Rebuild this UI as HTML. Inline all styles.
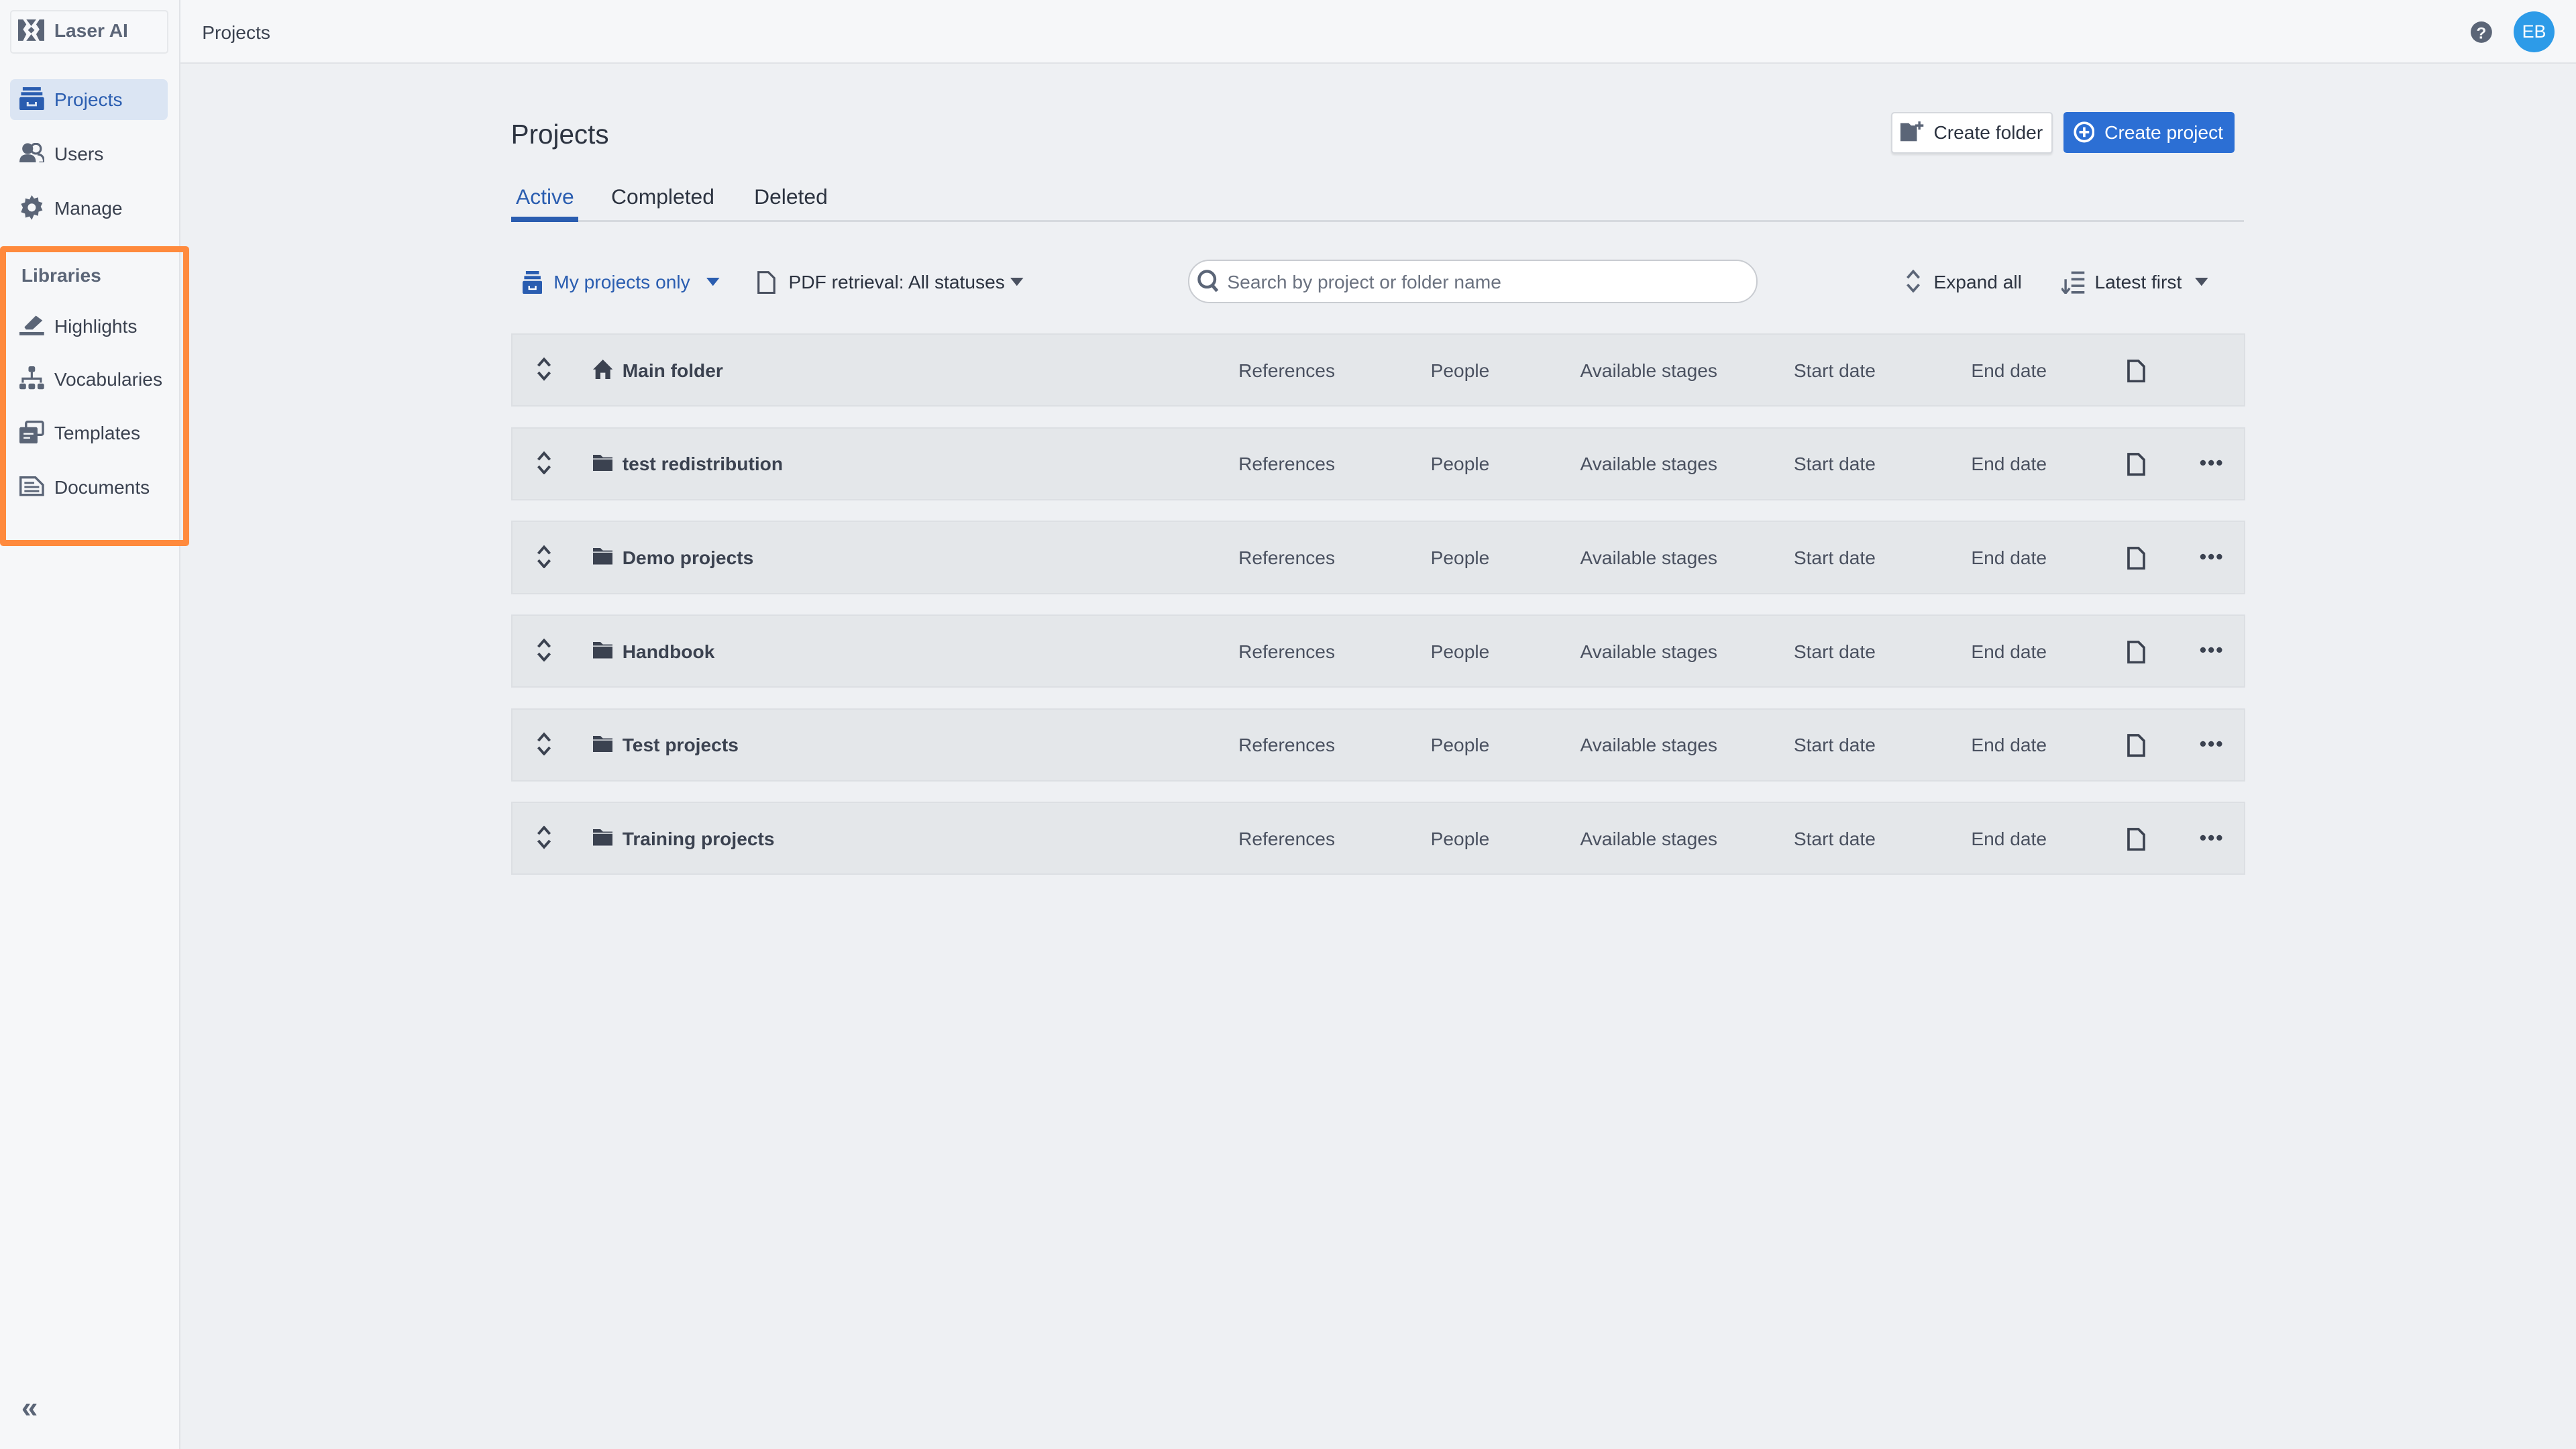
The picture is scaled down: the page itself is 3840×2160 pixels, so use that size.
<!DOCTYPE html>
<html><head><meta charset="utf-8"><style>
html,body{margin:0;padding:0;width:3840px;height:2160px;overflow:hidden;background:#eef0f3}
#w{position:relative;width:1568px;height:882px;zoom:2.44898;font-family:"Liberation Sans",sans-serif;color:#3b4250;font-size:11.5px}
.a{position:absolute}
.t{position:absolute;white-space:nowrap;line-height:14px}
svg{position:absolute;display:block}
.row{position:absolute;left:311px;width:1054px;height:43px;background:#e4e7ea;border:1px solid #dcdfe3}
.row .t{top:15px;color:#4a5160}
.nm{font-weight:bold;color:#3b4250!important}
</style></head><body><div id="w">
<div class="a" style="left:0;top:0;width:109px;height:882px;background:#f6f7f9;border-right:1px solid #e1e3e7"></div>
<div class="a" style="left:110px;top:0;width:1458px;height:38px;background:#f6f7f9;border-bottom:1px solid #e1e3e7"></div>
<div class="a" style="left:6px;top:6px;width:95px;height:25px;border:1px solid #e6e8eb;border-radius:2px;background:#f7f8fa"></div>
<svg style="left:11px;top:12px" width="16" height="13" viewBox="0 0 16 13"><path d="M0 0h3l2 3-2 3 2 3-2 4H0zM16 0h-3l-2 3 2 3-2 3 2 4h3zM5 0h6L8 4zM5 13h6L8 9zM6 6.5l2-2 2 2-2 2z" fill="#5b6577"/></svg>
<div class="t" style="left:33px;top:12px;font-weight:bold;color:#5b6577">Laser AI</div>
<div class="a" style="left:6px;top:48px;width:96px;height:25px;background:#dbe5f3;border-radius:3px"></div>
<svg style="left:12px;top:53px" width="15" height="14" viewBox="0 0 15 14"><rect x="2" y="0" width="11" height="2" fill="#2a5db0"/><rect x="1" y="3" width="13" height="2" fill="#2a5db0"/><rect x="0" y="6" width="15" height="8" rx="1" fill="#2a5db0"/><path d="M5 9v2h5V9" stroke="#dbe5f3" fill="none" stroke-width="1.2"/></svg>
<div class="t" style="left:33px;top:54px;color:#2a5db0">Projects</div>
<svg style="left:12px;top:87px" width="15" height="12" viewBox="0 0 15 12"><circle cx="5" cy="3.5" r="3.3" fill="#5b6577"/><path d="M0 12c0-4 2-5 5-5s5 1 5 5z" fill="#5b6577"/><circle cx="10" cy="3.5" r="3" fill="none" stroke="#5b6577" stroke-width="1.3"/><path d="M11 7c2 0 4 1 4 5h-3" fill="none" stroke="#5b6577" stroke-width="1.3"/></svg>
<div class="t" style="left:33px;top:87px">Users</div>
<svg style="left:12px;top:119px" width="15" height="15" viewBox="0 0 16 16"><path d="M8 0l1.5 2.2 2.6-.8.3 2.7 2.6.9-1.2 2.4 1.2 2.4-2.6.9-.3 2.7-2.6-.8L8 16l-1.5-2.2-2.6.8-.3-2.7-2.6-.9L2.2 8 1 5.6l2.6-.9.3-2.7 2.6.8z" fill="#5b6577"/><circle cx="8" cy="8" r="2.6" fill="#f6f7f9"/></svg>
<div class="t" style="left:33px;top:120px">Manage</div>
<div class="a" style="left:0;top:150px;width:108px;height:175px;border:4px solid #ff8a3d;border-radius:2px"></div>
<div class="t" style="left:13px;top:161px;font-weight:bold;color:#5b6577">Libraries</div>
<svg style="left:12px;top:191px" width="15" height="13" viewBox="0 0 15 13"><path d="M3 8l7-7 4 3-6 5.5H4z" fill="#5b6577"/><rect x="0" y="11" width="15" height="2" fill="#5b6577"/></svg>
<div class="t" style="left:33px;top:192px">Highlights</div>
<svg style="left:12px;top:223px" width="15" height="15" viewBox="0 0 15 15"><rect x="5.5" y="0" width="4" height="3.5" rx="1" fill="#5b6577"/><path d="M7.5 3.5v4M2 10V7.5h11V10" stroke="#5b6577" fill="none" stroke-width="1.3"/><rect x="0" y="10.5" width="4" height="3.5" rx="1" fill="#5b6577"/><rect x="5.5" y="10.5" width="4" height="3.5" rx="1" fill="#5b6577"/><rect x="11" y="10.5" width="4" height="3.5" rx="1" fill="#5b6577"/></svg>
<div class="t" style="left:33px;top:224px">Vocabularies</div>
<svg style="left:12px;top:256px" width="15" height="14" viewBox="0 0 15 14"><rect x="4" y="0.7" width="10.3" height="8" rx="1" fill="none" stroke="#5b6577" stroke-width="1.4"/><rect x="0" y="4" width="11" height="10" rx="1" fill="#5b6577"/><path d="M2.5 8h6M2.5 10.5h4" stroke="#f6f7f9" stroke-width="1"/></svg>
<div class="t" style="left:33px;top:257px">Templates</div>
<svg style="left:12px;top:290px" width="15" height="12" viewBox="0 0 15 12"><path d="M.7.7h9l4.6 4.6v6H.7z" fill="none" stroke="#5b6577" stroke-width="1.4"/><path d="M3 4h6M3 6.5h9M3 9h9" stroke="#5b6577" stroke-width="1.2"/></svg>
<div class="t" style="left:33px;top:290px">Documents</div>
<div class="t" style="left:13px;top:850px;font-size:18px;font-weight:bold;color:#5b6577">«</div>
<div class="t" style="left:123px;top:13px">Projects</div>
<svg style="left:1504px;top:13px" width="13" height="13" viewBox="0 0 13 13"><circle cx="6.5" cy="6.5" r="6.5" fill="#5b6577"/><text x="6.5" y="10.5" font-size="10" font-weight="bold" fill="#f6f7f9" text-anchor="middle" font-family="Liberation Sans">?</text></svg>
<div class="a" style="left:1530px;top:7px;width:25px;height:25px;border-radius:50%;background:#2d9be8;color:#fff;font-size:11px;line-height:25px;text-align:center">EB</div>
<div class="t" style="left:311px;top:72px;font-size:16.5px;line-height:20px;color:#2c3340">Projects</div>
<div class="a" style="left:1151px;top:68px;width:97px;height:24px;background:#fff;border:1px solid #d5d8dd;border-radius:2px;box-shadow:0 1px 1px rgba(0,0,0,.08)"></div>
<svg style="left:1157px;top:74px" width="14" height="12" viewBox="0 0 14 12"><path d="M0 1h5l1.5 1.5H10V12H0z" fill="#5b6577"/><path d="M11.5 0v5M9 2.5h5" stroke="#5b6577" stroke-width="1.4"/></svg>
<div class="t" style="left:1177px;top:74px;color:#2c3340">Create folder</div>
<div class="a" style="left:1256px;top:68px;width:104px;height:25px;background:#2c6fd4;border-radius:2px"></div>
<svg style="left:1262px;top:74px" width="13" height="13" viewBox="0 0 13 13"><circle cx="6.5" cy="6.5" r="5.6" fill="none" stroke="#fff" stroke-width="1.5"/><path d="M6.5 3.5v6M3.5 6.5h6" stroke="#fff" stroke-width="1.5"/></svg>
<div class="t" style="left:1281px;top:74px;color:#fff">Create project</div>
<div class="t" style="left:314px;top:112px;font-size:13px;line-height:16px;color:#2a5db0">Active</div>
<div class="t" style="left:372px;top:112px;font-size:13px;line-height:16px;color:#2c3340">Completed</div>
<div class="t" style="left:459px;top:112px;font-size:13px;line-height:16px;color:#2c3340">Deleted</div>
<div class="a" style="left:311px;top:134px;width:1055px;height:1px;background:#d6d9de"></div>
<div class="a" style="left:311px;top:132px;width:41px;height:3px;background:#2a5db0"></div>
<svg style="left:318px;top:165px" width="12" height="14" viewBox="0 0 12 14"><rect x="2" y="0" width="8" height="2" fill="#2a5db0"/><rect x="1" y="3" width="10" height="2" fill="#2a5db0"/><rect x="0" y="6" width="12" height="8" rx="1" fill="#2a5db0"/><path d="M4 9v2h4V9" stroke="#fff" fill="none"/></svg>
<div class="t" style="left:337px;top:165px;color:#2a5db0">My projects only</div>
<svg style="left:430px;top:169px" width="8" height="5" viewBox="0 0 8 5"><path d="M0 0h8L4 5z" fill="#2a5db0"/></svg>
<svg style="left:461px;top:165px" width="11" height="14" viewBox="0 0 11 14"><path d="M.7.7h6l3.6 3.6v9H.7z" fill="none" stroke="#4a5160" stroke-width="1.3"/></svg>
<div class="t" style="left:480px;top:165px;color:#2c3340">PDF retrieval: All statuses</div>
<svg style="left:615px;top:169px" width="8" height="5" viewBox="0 0 8 5"><path d="M0 0h8L4 5z" fill="#4a5160"/></svg>
<div class="a" style="left:723px;top:158px;width:345px;height:25px;background:#fff;border:1px solid #c9ccd1;border-radius:13px"></div>
<svg style="left:729px;top:164px" width="13" height="14" viewBox="0 0 13 14"><circle cx="5.8" cy="5.8" r="4.8" fill="none" stroke="#5b6577" stroke-width="1.8"/><path d="M9 9.5l3 3.5" stroke="#5b6577" stroke-width="2"/></svg>
<div class="t" style="left:747px;top:165px;color:#6b7280">Search by project or folder name</div>
<svg style="left:1160px;top:164px" width="9" height="14" viewBox="0 0 9 14"><path d="M1 5l3.5-4L8 5M1 9l3.5 4L8 9" fill="none" stroke="#5b6577" stroke-width="1.5"/></svg>
<div class="t" style="left:1177px;top:165px;color:#2c3340">Expand all</div>
<svg style="left:1255px;top:165px" width="14" height="14" viewBox="0 0 14 14"><path d="M2.5 5v8M0 10.5l2.5 3 2.5-3" fill="none" stroke="#5b6577" stroke-width="1.4"/><path d="M6 1h8M6 5h8M6 9h8M6 13h8" stroke="#5b6577" stroke-width="1.5"/></svg>
<div class="t" style="left:1275px;top:165px;color:#2c3340">Latest first</div>
<svg style="left:1336px;top:169px" width="8" height="5" viewBox="0 0 8 5"><path d="M0 0h8L4 5z" fill="#4a5160"/></svg>

<div class="row" style="top:203px">
 <svg style="left:15px;top:14px" width="9" height="14" viewBox="0 0 9 14"><path d="M1 5l3.5-4L8 5M1 9l3.5 4L8 9" fill="none" stroke="#3b4250" stroke-width="1.6"/></svg>
 <svg style="left:49px;top:15px" width="12" height="12" viewBox="0 0 12 12"><path d="M6 0L0 6h1.5v6h3V8h3v4h3V6H12z" fill="#3b4250"/></svg>
 <div class="t nm" style="left:67px">Main folder</div>
 <div class="t" style="left:442px">References</div><div class="t" style="left:559px">People</div><div class="t" style="left:650px">Available stages</div><div class="t" style="left:780px">Start date</div><div class="t" style="left:888px">End date</div>
 <svg style="left:983px;top:15px" width="11" height="14" viewBox="0 0 11 14"><path d="M.8.8h6l3.4 3.4v9H.8z" fill="none" stroke="#3b4250" stroke-width="1.5"/></svg>
</div>
<div class="row" style="top:260px">
 <svg style="left:15px;top:14px" width="9" height="14" viewBox="0 0 9 14"><path d="M1 5l3.5-4L8 5M1 9l3.5 4L8 9" fill="none" stroke="#3b4250" stroke-width="1.6"/></svg>
 <svg style="left:49px;top:16px" width="12" height="10" viewBox="0 0 12 10"><path d="M0 0h4.5l1.5 1.5H12V10H0z" fill="#3b4250"/><path d="M0 2.5h12" stroke="#e4e7ea" stroke-width=".6"/></svg>
 <div class="t nm" style="left:67px">test redistribution</div>
 <div class="t" style="left:442px">References</div><div class="t" style="left:559px">People</div><div class="t" style="left:650px">Available stages</div><div class="t" style="left:780px">Start date</div><div class="t" style="left:888px">End date</div>
 <svg style="left:983px;top:15px" width="11" height="14" viewBox="0 0 11 14"><path d="M.8.8h6l3.4 3.4v9H.8z" fill="none" stroke="#3b4250" stroke-width="1.5"/></svg>
 <svg style="left:1027px;top:19px" width="14" height="4" viewBox="0 0 14 4"><circle cx="2" cy="2" r="1.7" fill="#3b4250"/><circle cx="7" cy="2" r="1.7" fill="#3b4250"/><circle cx="12" cy="2" r="1.7" fill="#3b4250"/></svg>
</div>
<div class="row" style="top:317px">
 <svg style="left:15px;top:14px" width="9" height="14" viewBox="0 0 9 14"><path d="M1 5l3.5-4L8 5M1 9l3.5 4L8 9" fill="none" stroke="#3b4250" stroke-width="1.6"/></svg>
 <svg style="left:49px;top:16px" width="12" height="10" viewBox="0 0 12 10"><path d="M0 0h4.5l1.5 1.5H12V10H0z" fill="#3b4250"/><path d="M0 2.5h12" stroke="#e4e7ea" stroke-width=".6"/></svg>
 <div class="t nm" style="left:67px">Demo projects</div>
 <div class="t" style="left:442px">References</div><div class="t" style="left:559px">People</div><div class="t" style="left:650px">Available stages</div><div class="t" style="left:780px">Start date</div><div class="t" style="left:888px">End date</div>
 <svg style="left:983px;top:15px" width="11" height="14" viewBox="0 0 11 14"><path d="M.8.8h6l3.4 3.4v9H.8z" fill="none" stroke="#3b4250" stroke-width="1.5"/></svg>
 <svg style="left:1027px;top:19px" width="14" height="4" viewBox="0 0 14 4"><circle cx="2" cy="2" r="1.7" fill="#3b4250"/><circle cx="7" cy="2" r="1.7" fill="#3b4250"/><circle cx="12" cy="2" r="1.7" fill="#3b4250"/></svg>
</div>
<div class="row" style="top:374px">
 <svg style="left:15px;top:14px" width="9" height="14" viewBox="0 0 9 14"><path d="M1 5l3.5-4L8 5M1 9l3.5 4L8 9" fill="none" stroke="#3b4250" stroke-width="1.6"/></svg>
 <svg style="left:49px;top:16px" width="12" height="10" viewBox="0 0 12 10"><path d="M0 0h4.5l1.5 1.5H12V10H0z" fill="#3b4250"/><path d="M0 2.5h12" stroke="#e4e7ea" stroke-width=".6"/></svg>
 <div class="t nm" style="left:67px">Handbook</div>
 <div class="t" style="left:442px">References</div><div class="t" style="left:559px">People</div><div class="t" style="left:650px">Available stages</div><div class="t" style="left:780px">Start date</div><div class="t" style="left:888px">End date</div>
 <svg style="left:983px;top:15px" width="11" height="14" viewBox="0 0 11 14"><path d="M.8.8h6l3.4 3.4v9H.8z" fill="none" stroke="#3b4250" stroke-width="1.5"/></svg>
 <svg style="left:1027px;top:19px" width="14" height="4" viewBox="0 0 14 4"><circle cx="2" cy="2" r="1.7" fill="#3b4250"/><circle cx="7" cy="2" r="1.7" fill="#3b4250"/><circle cx="12" cy="2" r="1.7" fill="#3b4250"/></svg>
</div>
<div class="row" style="top:431px">
 <svg style="left:15px;top:14px" width="9" height="14" viewBox="0 0 9 14"><path d="M1 5l3.5-4L8 5M1 9l3.5 4L8 9" fill="none" stroke="#3b4250" stroke-width="1.6"/></svg>
 <svg style="left:49px;top:16px" width="12" height="10" viewBox="0 0 12 10"><path d="M0 0h4.5l1.5 1.5H12V10H0z" fill="#3b4250"/><path d="M0 2.5h12" stroke="#e4e7ea" stroke-width=".6"/></svg>
 <div class="t nm" style="left:67px">Test projects</div>
 <div class="t" style="left:442px">References</div><div class="t" style="left:559px">People</div><div class="t" style="left:650px">Available stages</div><div class="t" style="left:780px">Start date</div><div class="t" style="left:888px">End date</div>
 <svg style="left:983px;top:15px" width="11" height="14" viewBox="0 0 11 14"><path d="M.8.8h6l3.4 3.4v9H.8z" fill="none" stroke="#3b4250" stroke-width="1.5"/></svg>
 <svg style="left:1027px;top:19px" width="14" height="4" viewBox="0 0 14 4"><circle cx="2" cy="2" r="1.7" fill="#3b4250"/><circle cx="7" cy="2" r="1.7" fill="#3b4250"/><circle cx="12" cy="2" r="1.7" fill="#3b4250"/></svg>
</div>
<div class="row" style="top:488px">
 <svg style="left:15px;top:14px" width="9" height="14" viewBox="0 0 9 14"><path d="M1 5l3.5-4L8 5M1 9l3.5 4L8 9" fill="none" stroke="#3b4250" stroke-width="1.6"/></svg>
 <svg style="left:49px;top:16px" width="12" height="10" viewBox="0 0 12 10"><path d="M0 0h4.5l1.5 1.5H12V10H0z" fill="#3b4250"/><path d="M0 2.5h12" stroke="#e4e7ea" stroke-width=".6"/></svg>
 <div class="t nm" style="left:67px">Training projects</div>
 <div class="t" style="left:442px">References</div><div class="t" style="left:559px">People</div><div class="t" style="left:650px">Available stages</div><div class="t" style="left:780px">Start date</div><div class="t" style="left:888px">End date</div>
 <svg style="left:983px;top:15px" width="11" height="14" viewBox="0 0 11 14"><path d="M.8.8h6l3.4 3.4v9H.8z" fill="none" stroke="#3b4250" stroke-width="1.5"/></svg>
 <svg style="left:1027px;top:19px" width="14" height="4" viewBox="0 0 14 4"><circle cx="2" cy="2" r="1.7" fill="#3b4250"/><circle cx="7" cy="2" r="1.7" fill="#3b4250"/><circle cx="12" cy="2" r="1.7" fill="#3b4250"/></svg>
</div>
</div></body></html>
